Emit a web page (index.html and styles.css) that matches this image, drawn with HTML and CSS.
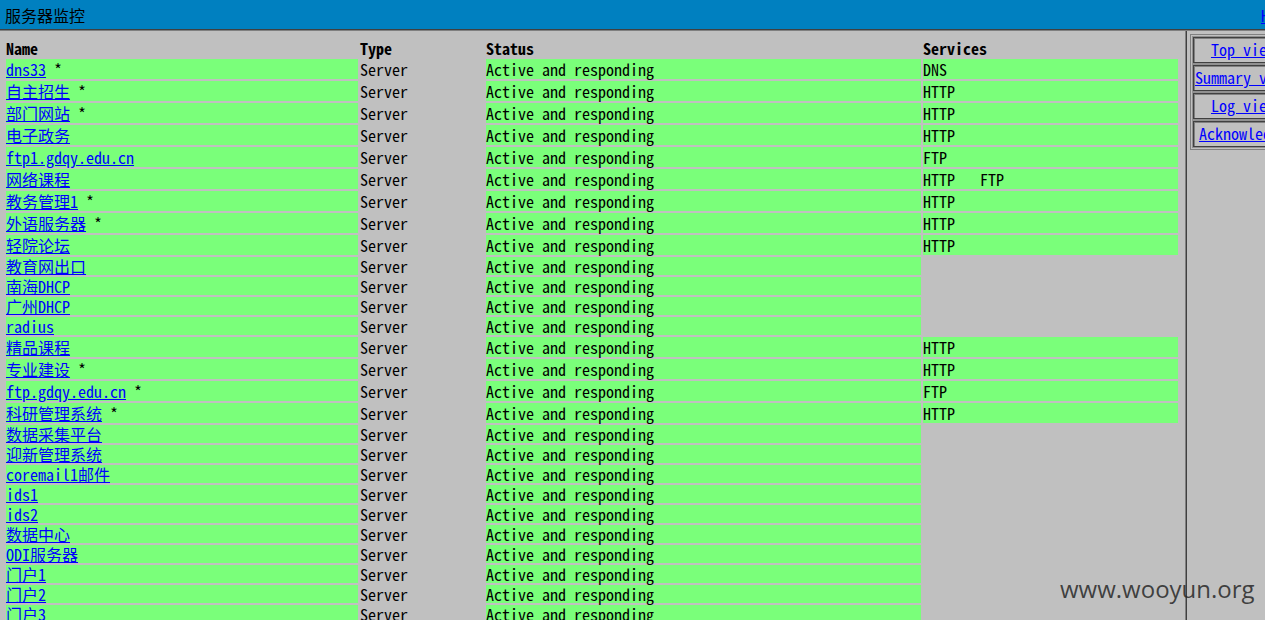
FILE: index.html
```html
<!DOCTYPE html>
<html>
<head>
<meta charset="utf-8">
<title>服务器监控</title>
<link rel="stylesheet" href="styles.css">
</head>
<body>
<header class="topbar">
  <span class="title">服务器监控</span>
  <a class="help" href="#">Help</a>
</header>
<div class="frames">
  <main class="list">
    <table class="hosts">
      <thead>
        <tr><th class="c-name">Name</th><th class="c-type">Type</th><th class="c-status">Status</th><th class="c-svc">Services</th></tr>
      </thead>
      <tbody>
        <tr class="tall"><td class="ok"><a href="#">dns33</a> *</td><td>Server</td><td class="ok">Active and responding</td><td class="ok">DNS</td></tr>
        <tr class="tall"><td class="ok"><a href="#">自主招生</a> *</td><td>Server</td><td class="ok">Active and responding</td><td class="ok">HTTP</td></tr>
        <tr class="tall"><td class="ok"><a href="#">部门网站</a> *</td><td>Server</td><td class="ok">Active and responding</td><td class="ok">HTTP</td></tr>
        <tr class="tall"><td class="ok"><a href="#">电子政务</a></td><td>Server</td><td class="ok">Active and responding</td><td class="ok">HTTP</td></tr>
        <tr class="tall"><td class="ok"><a href="#">ftp1.gdqy.edu.cn</a></td><td>Server</td><td class="ok">Active and responding</td><td class="ok">FTP</td></tr>
        <tr class="tall"><td class="ok"><a href="#">网络课程</a></td><td>Server</td><td class="ok">Active and responding</td><td class="ok"><span class="svc">HTTP</span><span class="svc">FTP</span></td></tr>
        <tr class="tall"><td class="ok"><a href="#">教务管理1</a> *</td><td>Server</td><td class="ok">Active and responding</td><td class="ok">HTTP</td></tr>
        <tr class="tall"><td class="ok"><a href="#">外语服务器</a> *</td><td>Server</td><td class="ok">Active and responding</td><td class="ok">HTTP</td></tr>
        <tr class="tall"><td class="ok"><a href="#">轻院论坛</a></td><td>Server</td><td class="ok">Active and responding</td><td class="ok">HTTP</td></tr>
        <tr><td class="ok"><a href="#">教育网出口</a></td><td>Server</td><td class="ok">Active and responding</td><td></td></tr>
        <tr><td class="ok"><a href="#">南海DHCP</a></td><td>Server</td><td class="ok">Active and responding</td><td></td></tr>
        <tr><td class="ok"><a href="#">广州DHCP</a></td><td>Server</td><td class="ok">Active and responding</td><td></td></tr>
        <tr><td class="ok"><a href="#">radius</a></td><td>Server</td><td class="ok">Active and responding</td><td></td></tr>
        <tr class="tall"><td class="ok"><a href="#">精品课程</a></td><td>Server</td><td class="ok">Active and responding</td><td class="ok">HTTP</td></tr>
        <tr class="tall"><td class="ok"><a href="#">专业建设</a> *</td><td>Server</td><td class="ok">Active and responding</td><td class="ok">HTTP</td></tr>
        <tr class="tall"><td class="ok"><a href="#">ftp.gdqy.edu.cn</a> *</td><td>Server</td><td class="ok">Active and responding</td><td class="ok">FTP</td></tr>
        <tr class="tall"><td class="ok"><a href="#">科研管理系统</a> *</td><td>Server</td><td class="ok">Active and responding</td><td class="ok">HTTP</td></tr>
        <tr><td class="ok"><a href="#">数据采集平台</a></td><td>Server</td><td class="ok">Active and responding</td><td></td></tr>
        <tr><td class="ok"><a href="#">迎新管理系统</a></td><td>Server</td><td class="ok">Active and responding</td><td></td></tr>
        <tr><td class="ok"><a href="#">coremail1邮件</a></td><td>Server</td><td class="ok">Active and responding</td><td></td></tr>
        <tr><td class="ok"><a href="#">ids1</a></td><td>Server</td><td class="ok">Active and responding</td><td></td></tr>
        <tr><td class="ok"><a href="#">ids2</a></td><td>Server</td><td class="ok">Active and responding</td><td></td></tr>
        <tr><td class="ok"><a href="#">数据中心</a></td><td>Server</td><td class="ok">Active and responding</td><td></td></tr>
        <tr><td class="ok"><a href="#">ODI服务器</a></td><td>Server</td><td class="ok">Active and responding</td><td></td></tr>
        <tr><td class="ok"><a href="#">门户1</a></td><td>Server</td><td class="ok">Active and responding</td><td></td></tr>
        <tr><td class="ok"><a href="#">门户2</a></td><td>Server</td><td class="ok">Active and responding</td><td></td></tr>
        <tr><td class="ok"><a href="#">门户3</a></td><td>Server</td><td class="ok">Active and responding</td><td></td></tr>
      </tbody>
    </table>
  </main>
  <div class="divider"></div>
  <aside class="side">
    <div class="menu">
      <div class="btn"><a href="#">Top view</a></div>
      <div class="btn"><a href="#">Summary view</a></div>
      <div class="btn"><a href="#">Log view</a></div>
      <div class="btn"><a href="#">Acknowledge</a></div>
    </div>
  </aside>
</div>
<div class="watermark">www.wooyun.org</div>
</body>
</html>
```
FILE: styles.css
```css
html, body {
  margin: 0;
  padding: 0;
  height: 100%;
  overflow: hidden;
}
body {
  background: #c0c0c0;
  font-family: "Noto Sans Mono CJK SC", "Liberation Mono", "Noto Sans CJK SC", monospace;
  font-size: 16px;
  color: #000;
  position: relative;
}
a {
  color: #0000ff;
  text-decoration: underline;
}
.topbar {
  height: 29px;
  background: #0080c0;
  border-bottom: 1px solid #404040;
  box-shadow: 0 1px 0 #808080;
  display: flex;
  align-items: center;
  padding-left: 5px;
  overflow: hidden;
  line-height: 18px;
}
.title {
  font-family: "Noto Sans CJK SC", sans-serif;
  font-size: 16px;
  color: #000;
}
.help {
  margin-left: auto;
  margin-right: -28px;
}
.frames {
  display: flex;
  height: 590px;
  margin-top: 1px;
}
.list {
  width: 1181px;
  padding: 6px 0 0 4px;
  overflow: hidden;
}
.divider {
  width: 2px;
  flex: none;
  background: linear-gradient(to right, #808080 50%, #404040 50%);
}
.side {
  flex: 1;
  padding: 3px 0 0 3px;
  overflow: hidden;
}
.hosts {
  border-collapse: separate;
  border-spacing: 2px;
}
.hosts th,
.hosts td {
  padding: 0;
  height: 18px;
  line-height: 18px;
  text-align: left;
  vertical-align: middle;
  white-space: nowrap;
}
.hosts th {
  font-weight: bold;
}
.hosts tr.tall td {
  height: 20px;
}
.c-name { width: 352px; }
.c-type { width: 124px; }
.c-status { width: 435px; }
.c-svc { width: 255px; }
.hosts td.ok {
  background: #7aff7a;
}
.svc {
  margin-right: 25px;
}
.menu {
  width: 100px;
  border: 1px solid #808080;
  padding: 2px;
  display: flex;
  flex-direction: column;
  gap: 2px;
}
.btn {
  height: 24px;
  box-sizing: border-box;
  height: 26px;
  padding-bottom: 2px;
  border: 1px solid #404040;
  box-shadow: inset 1px 1px 0 #808080, 0 0 0 1px #909090;
  display: flex;
  align-items: center;
  justify-content: center;
  white-space: nowrap;
  line-height: 18px;
}
.watermark {
  position: absolute;
  left: 1060px;
  top: 572px;
  font-family: "Open Sans", "Noto Sans", sans-serif;
  font-size: 24px;
  color: rgba(40, 40, 40, 0.85);
}
```
